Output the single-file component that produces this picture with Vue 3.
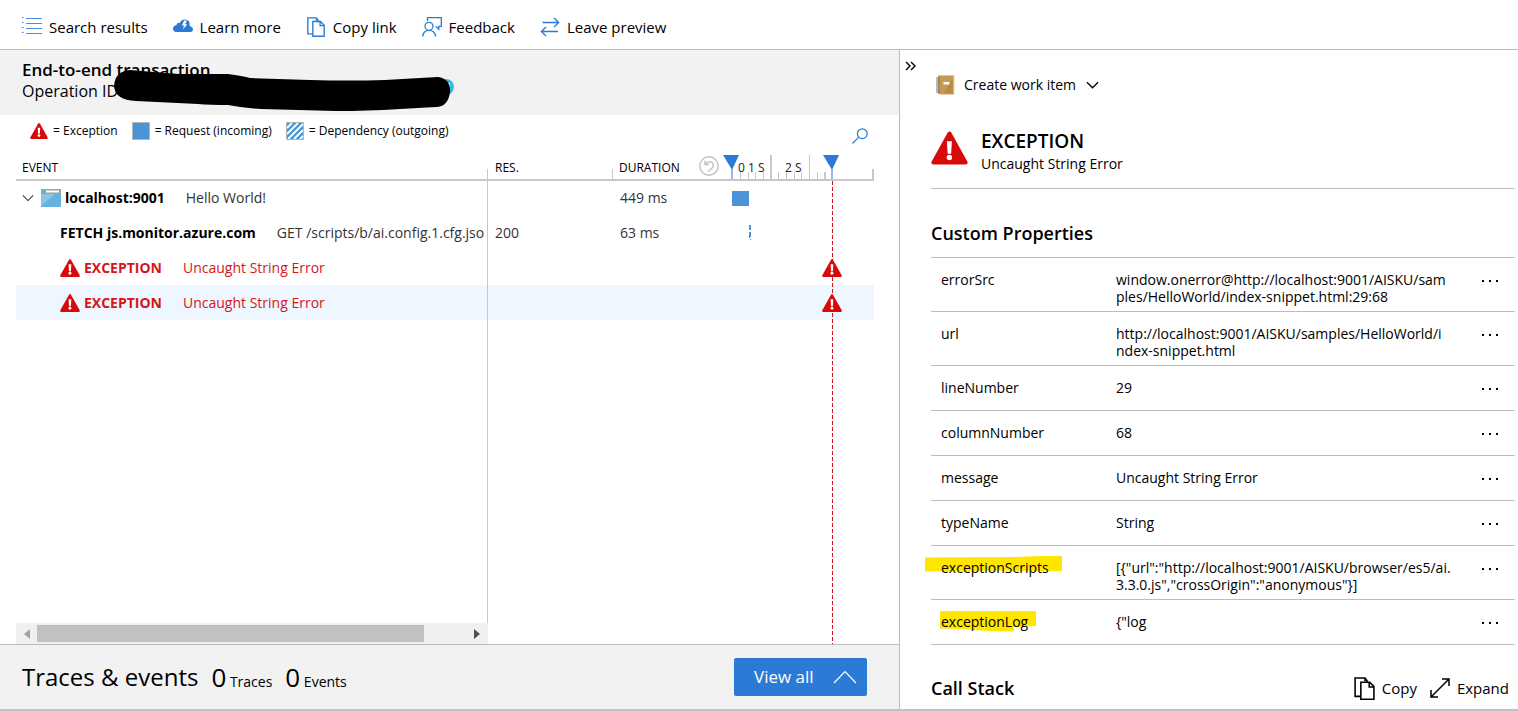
<script setup>
const legend = [
  { kind: 'exception', label: '= Exception' },
  { kind: 'request', label: '= Request (incoming)' },
  { kind: 'dependency', label: '= Dependency (outgoing)' },
]

const events = [
  { kind: 'root', name: 'localhost:9001', detail: 'Hello World!', res: '', duration: '449 ms', start: 9, width: 17 },
  { kind: 'fetch', name: 'FETCH js.monitor.azure.com', detail: 'GET /scripts/b/ai.config.1.cfg.jso', res: '200', duration: '63 ms', start: 26, width: 2 },
  { kind: 'error', name: 'EXCEPTION', detail: 'Uncaught String Error', res: '', duration: '', start: 99, width: 20 },
  { kind: 'error', name: 'EXCEPTION', detail: 'Uncaught String Error', res: '', duration: '', start: 99, width: 20, selected: true },
]

const properties = [
  { key: 'errorSrc', value: 'window.onerror@http://localhost:9001/AISKU/sam\nples/HelloWorld/index-snippet.html:29:68' },
  { key: 'url', value: 'http://localhost:9001/AISKU/samples/HelloWorld/i\nndex-snippet.html' },
  { key: 'lineNumber', value: '29' },
  { key: 'columnNumber', value: '68' },
  { key: 'message', value: 'Uncaught String Error' },
  { key: 'typeName', value: 'String' },
  { key: 'exceptionScripts', value: '[{"url":"http://localhost:9001/AISKU/browser/es5/ai.\n3.3.0.js","crossOrigin":"anonymous"}]', mark: 'scripts' },
  { key: 'exceptionLog', value: '{"log', mark: 'log' },
]
</script>

<template>
  <div class="page">
    <svg class="defs" aria-hidden="true">
      <symbol id="warn" viewBox="0 0 38 34">
        <path d="M17.2 1.2Q19-1 20.8 1.2L37.2 30.5Q38.6 33.6 35.5 34H2.5Q-.6 33.6.8 30.5Z" fill="#d70a0a" />
        <path d="M16.3 10h5.2l-.8 13h-3.6z" fill="#fff" />
        <circle cx="18.9" cy="26.8" r="2.8" fill="#fff" />
      </symbol>
      <symbol id="copy" viewBox="0 0 20 22">
        <path d="M6.5 18.5H1V1h9.5l2.5 3.5M10.500 1v3" fill="none" stroke="currentColor" stroke-width="1.500" />
        <path d="M6.500 5H15l4 4v12.200H6.500zM14.500 5v4.500H19" fill="#fff" stroke="currentColor" stroke-width="1.500" />
      </symbol>
    </svg>

    <header class="toolbar">
      <button class="tool" type="button">
        <svg class="tool-icon" viewBox="0 0 20 20" fill="none" stroke="#2b7bd6">
          <path d="M4 1.500h16M4 6.500h16M4 11.500h16M4 16.500h16" opacity=".85" />
          <path d="M0 .500h1.500M0 5.500h1.500M0 10.500h1.500M0 15.500h1.500" />
        </svg>
        Search results
      </button>
      <button class="tool" type="button">
        <svg class="tool-icon" viewBox="0 0 20 20">
          <path d="M3.500 15Q0 14.800 0 11.500.2 8.500 3.500 8 4 5.200 7 5.800 8.300 2.500 12 2.500q5 .4 4.700 5.500 0 1 .8 1.500Q20 10 20 12.500 19.800 15 17 15z" fill="#2b7bd6" />
          <path d="M11 3.500 9 8.500h2.200L9.700 12.500l4.600-5.300h-2.200l2-3.700z" fill="#fff" />
        </svg>
        Learn more
      </button>
      <button class="tool blue" type="button">
        <svg class="tool-icon"><use href="#copy" /></svg>
        <span class="ink">Copy link</span>
      </button>
      <button class="tool" type="button">
        <svg class="tool-icon" viewBox="0 0 20 20" fill="none" stroke="#2b7bd6" stroke-width="1.300">
          <path d="M5.500 4V.7h13.800v8.600h-2.500v3l-3-3" />
          <circle cx="7" cy="9.300" r="4" />
          <path d="M.7 19.500Q1.200 13.300 7 13.300t6.700 6.200" />
        </svg>
        Feedback
      </button>
      <button class="tool" type="button">
        <svg class="tool-icon" viewBox="0 0 20 20" fill="none" stroke="#2b7bd6" stroke-width="1.300">
          <path d="M2.500 5.500h16M14 1l4.700 4.500L14 10M18 14.500H1.500M6 10l-4.700 4.500L6 19" />
        </svg>
        Leave preview
      </button>
    </header>

    <main class="main">
      <section class="left">
        <div class="title-bar">
          <h1>End-to-end transaction</h1>
          <p>Operation ID</p>
          <svg class="scribble" viewBox="0 0 342 44" aria-hidden="true">
            <circle cx="332" cy="18" r="8" fill="#3fb8e0" />
            <path d="M332 14h4v8h-4z" fill="#fff" />
            <path d="M0 17Q1 2 16 1q23 2 49 4h49q15 2 22 4l60 2q40 1 75 0l35-2 18-1q13 2 12 15-2 15-14 15l-36 2q-34 2-64 2l-75-2q-18-1-33-4-18 0-30-1l-62-3Q1 31 0 17Z" fill="#000" />
          </svg>
        </div>

        <div class="legend-bar">
          <span v-for="item in legend" :key="item.kind" class="legend">
            <svg v-if="item.kind === 'exception'" class="legend-icon warn"><use href="#warn" /></svg>
            <svg v-else-if="item.kind === 'request'" class="legend-icon" viewBox="0 0 18 18">
              <path d="M.5.500h17v17H.5z" fill="#4a95da" stroke="#b5b5b5" />
            </svg>
            <svg v-else class="legend-icon" viewBox="0 0 18 18">
              <path d="M1 1h16v16H1z" fill="#4a95da" />
              <path d="M1 6 6 1M1 12 12 1M2 17 17 2M8 17l9-9M14 17l3-3" stroke="#fff" stroke-width="1.800" />
              <path d="M.5.500h17v17H.5z" fill="none" stroke="#b5b5b5" />
            </svg>
            {{ item.label }}
          </span>
          <button class="search" type="button" aria-label="Search">
            <svg viewBox="0 0 16 16" fill="none" stroke="#2b7bd6" stroke-width="1.200">
              <circle cx="10.300" cy="5.700" r="4.900" /><path d="M6.800 9.200.500 15.500" />
            </svg>
          </button>
        </div>

        <div class="chart">
          <table class="events">
            <colgroup><col /><col class="c-res" /><col class="c-dur" /><col class="c-time" /></colgroup>
            <thead>
              <tr>
                <th class="first">EVENT</th>
                <th class="res">RES.</th>
                <th class="dur">
                  <div class="dur-head">
                    <span>DURATION</span>
                    <button type="button" class="reset" aria-label="Reset zoom">
                      <svg viewBox="0 0 20 20" fill="none" stroke="#c2c2c2" stroke-width="1.400">
                        <circle cx="10" cy="10" r="9.200" />
                        <path d="M6 4.500v4h4M6.500 8.200Q8.500 5.700 11 5.800q3.400.4 3.300 3.600-.1 1.600-1.300 2.800L9 15.500" />
                      </svg>
                    </button>
                  </div>
                </th>
                <th class="time">
                  <svg class="ruler" viewBox="0 0 151 24">
                    <g stroke="#c8c8c8">
                      <path d="M17.500 17v7M25.500 17v7M32.500 17v7M40.500 17v7M55.500 17v7M63.500 17v7M71.500 17v7M78.500 17v7M94.500 17v7M86.500 0v24" />
                      <path d="M48 0v24M102 17v7M150 14v10" stroke-width="2" />
                    </g>
                    <path d="M0 0h16L9.500 14V24h-1V14zM100 0h16l-6.500 14V24h-1V14z" fill="#2b7bd6" />
                    <text x="15" y="17">0</text><text x="25" y="17">1 S</text><text x="62" y="17">2 S</text>
                  </svg>
                </th>
              </tr>
            </thead>
            <tbody>
              <tr v-for="(event, i) in events" :key="i" :class="[event.kind, { selected: event.selected }]">
                <td class="first">
                  <div class="event">
                    <svg v-if="event.kind === 'root'" class="chev" viewBox="0 0 14 8" fill="none" stroke="#333" stroke-width="1.200"><path d="M1 1l6 6 6-6" /></svg>
                    <svg v-if="event.kind === 'root'" class="site" viewBox="0 0 20 18">
                      <path d="M0 0h20v18H0z" fill="#66b4dc" />
                      <path d="M0 5h14L0 17z" fill="#8ac6e4" />
                      <path d="M0 0h20v5H0z" fill="#a0a1a2" />
                      <path d="M5 1.500h13v2H5z" fill="#fff" /><circle cx="2.500" cy="2.500" r="1.700" fill="#59b4d9" />
                    </svg>
                    <svg v-if="event.kind === 'error'" class="row-warn"><use href="#warn" /></svg>
                    <strong>{{ event.name }}</strong>
                    <span>{{ event.detail }}</span>
                  </div>
                </td>
                <td class="res">{{ event.res }}</td>
                <td class="dur">{{ event.duration }}</td>
                <td class="time">
                  <svg v-if="event.kind === 'error'" class="mark" :style="{ marginLeft: event.start + 'px', width: event.width + 'px' }"><use href="#warn" /></svg>
                  <div v-else class="bar" :style="{ marginLeft: event.start + 'px', width: event.width + 'px' }"></div>
                </td>
              </tr>
            </tbody>
          </table>
          <div class="guide event-guide"></div>
          <div class="guide res-guide"></div>
          <div class="cursor"></div>
          <div class="scrollbar">
            <svg viewBox="0 0 6 10"><path d="M6 0v10L0 5z" fill="#a3a3a3" /></svg>
            <div class="track"><div class="thumb"></div></div>
            <svg viewBox="0 0 6 10"><path d="M0 0v10l6-5z" fill="#505050" /></svg>
          </div>
        </div>

        <footer class="footer">
          <h2>Traces &amp; events</h2>
          <span class="count"><b>0</b> Traces</span>
          <span class="count"><b>0</b> Events</span>
          <button class="view-all" type="button">
            View all
            <svg viewBox="0 0 24 14" fill="none" stroke="#fff" stroke-width="1.200"><path d="M1 13 12 1.500 23 13" /></svg>
          </button>
        </footer>
      </section>

      <aside class="right">
        <button class="collapse" type="button" aria-label="Collapse panel">
          <svg viewBox="0 0 11 10" fill="none" stroke="#000" stroke-width="1.400"><path d="M1 1l4 4-4 4M6 1l4 4-4 4" /></svg>
        </button>
        <div class="details">
          <button class="work-item" type="button">
            <svg class="book" viewBox="0 0 20 20">
              <path d="M3 1h15.500v18H3z" fill="#b98b42" />
              <path d="M5 1h13.500v1.500L8 19H3V1z" fill="#c49a55" />
              <path d="M3 .500h16v18.800H5" fill="none" stroke="#dfc794" />
              <path d="M8.500 7h6v2.500h-6z" fill="#fff" />
              <path d="M3 2.500v16" stroke="#777" stroke-width="4" stroke-dasharray="1 1" />
            </svg>
            Create work item
            <svg class="drop" viewBox="0 0 14 8" fill="none" stroke="#000" stroke-width="1.400"><path d="M1 1l6 6 6-6" /></svg>
          </button>

          <div class="summary">
            <svg><use href="#warn" /></svg>
            <div>
              <h2>EXCEPTION</h2>
              <p>Uncaught String Error</p>
            </div>
          </div>

          <h3 class="props-title">Custom Properties</h3>
          <table class="props">
            <colgroup><col class="c-key" /><col /><col class="c-more" /></colgroup>
            <tbody>
              <tr v-for="prop in properties" :key="prop.key">
                <th scope="row">
                  <span class="key">
                    <svg v-if="prop.mark === 'scripts'" class="hl hl-scripts" viewBox="0 0 137 16"><path d="M0 1.500 90 1l25-1h22v15L75 14.500 0 15.500z" fill="#ffe600" /></svg>
                    <svg v-if="prop.mark === 'log'" class="hl hl-log" viewBox="0 0 96 21"><path d="M0 0h96v15l-22 1v4.500Q40 20 25 18L0 17.500z" fill="#ffe600" /></svg>
                    <span class="key-text">{{ prop.key }}</span>
                  </span>
                </th>
                <td>{{ prop.value }}</td>
                <td class="more">
                  <button type="button" aria-label="More">
                    <svg viewBox="0 0 16 2"><path d="M0 0h2v2H0zM7 0h2v2H7zM14 0h2v2h-2z" /></svg>
                  </button>
                </td>
              </tr>
            </tbody>
          </table>

          <div class="stack-bar">
            <h3>Call Stack</h3>
            <button type="button"><svg class="copy-icon"><use href="#copy" /></svg>Copy</button>
            <button type="button">
              <svg class="expand-icon" viewBox="0 0 20 20" fill="none" stroke="#000" stroke-width="1.500"><path d="M1.500 18.500l17-17M12 1h7v7M1 12v7h7" /></svg>Expand
            </button>
          </div>
        </div>
      </aside>
    </main>
  </div>
</template>

<style>
body { margin: 0; }
</style>

<style scoped>
.page {
  display: flex;
  flex-direction: column;
  box-sizing: border-box;
  height: 100vh;
  overflow: hidden;
  border-bottom: 2px solid #bfc0cd;
  background: #fff;
  color: #000;
  font: 14px/20px "Open Sans", "Noto Sans", sans-serif;
}
.defs { position: absolute; width: 0; height: 0; }
h1, h2, h3, p { margin: 0; }
button { padding: 0; border: 0; background: none; color: inherit; font: inherit; cursor: pointer; }
svg { display: block; flex: none; }

.toolbar { display: flex; flex: none; align-items: center; gap: 25px; box-sizing: border-box; height: 50px; padding: 4px 22px 0; border-bottom: 1px solid #bdbdbd; }
.tool { display: flex; align-items: center; gap: 7px; font-size: 15px; }
.tool-icon { width: 20px; height: 20px; }
.blue { color: #2b7bd6; }
.ink { color: #000; }

.main { display: grid; flex: 1; grid-template-columns: 900fr 618fr; min-height: 0; }
.left { display: flex; flex-direction: column; min-width: 0; border-right: 1px solid #bdbdbd; }
.title-bar { position: relative; box-sizing: border-box; height: 65px; padding: 9px 22px; background: #f2f2f2; }
.title-bar h1 { font-size: 17px; font-weight: 600; line-height: 22px; }
.title-bar p { font-size: 16px; line-height: 20px; }
.scribble { position: absolute; top: 19px; left: 114px; width: 342px; height: 44px; }

.legend-bar { display: flex; align-items: center; gap: 14px; height: 38px; padding: 0 31px 0 30px; font-size: 12px; }
.legend { display: flex; align-items: center; gap: 5px; margin-bottom: 7px; }
.legend-icon { width: 18px; height: 18px; }
.legend-icon.warn { height: 16px; }
.search { margin-left: auto; margin-top: 4px; }
.search svg { width: 16px; height: 16px; }

.chart { position: relative; flex: 1; margin: 0 25px 0 16px; min-height: 0; }
.events { width: 100%; border-collapse: separate; border-spacing: 0; table-layout: fixed; }
.c-res { width: 126px; }
.c-dur { width: 110px; }
.c-time { width: 151px; }
.events th { padding: 4px 6px 0; border-bottom: 2px solid #c8c8c8; font-size: 12px; font-weight: 400; text-align: left; vertical-align: middle; }
.events th.dur { padding: 0 6px; }
.events td { height: 35px; padding: 0 7px; color: #333; vertical-align: middle; }
.events .root td { height: 34px; }
.events .first { overflow: hidden; padding-left: 6px; padding-right: 0; }
.events .res { padding-left: 8px; }
.events .time, .events th.time { padding: 0; }
.dur-head { display: flex; align-items: center; justify-content: space-between; margin-right: -2px; }
.dur-head span { padding-top: 4px; }
.reset svg { width: 20px; height: 20px; }
.ruler { width: 151px; height: 24px; margin-top: 2px; fill: #222; font-size: 12px; }
.event { display: flex; align-items: center; overflow: hidden; white-space: nowrap; }
.event strong { color: #000; font-weight: 700; margin-right: 21px; }
.chev { width: 12px; height: 8px; margin-right: 7px; }
.site { width: 20px; height: 18px; margin-right: 4px; }
.fetch .event, .error .event { padding-left: 38px; }
.row-warn { width: 20px; height: 18px; margin-right: 4px; }
.error .event, .error .event strong { color: #d6141a; }
.selected td { background: #eef6ff; }
.bar { height: 15px; background: #4a95da; }
.fetch .bar { background: repeating-linear-gradient(160deg, #4a95da 0 5px, #fff 5px 7px); }
.mark { position: relative; z-index: 1; height: 18px; }
.guide { position: absolute; width: 1px; background: #c8c8c8; }
.event-guide { top: 16px; bottom: 20px; right: 386px; }
.res-guide { top: 16px; height: 12px; right: 261px; }
.cursor { position: absolute; top: 28px; right: 41px; bottom: 0; width: 1px; background: repeating-linear-gradient(#d6141a 0 4px, transparent 4px 6px); }
.scrollbar { position: absolute; right: 386px; bottom: 0; left: 0; display: flex; align-items: center; gap: 7px; box-sizing: border-box; height: 21px; padding: 0 8px; background: #f0f0f0; }
.scrollbar svg { width: 6px; height: 10px; }
.track { flex: 1; }
.thumb { width: 90%; height: 17px; background: #c1c1c1; }

.footer { display: flex; flex: none; align-items: center; box-sizing: border-box; height: 65px; padding: 0 32px 0 22px; border-top: 1px solid #bdbdbd; background: #f2f2f2; }
.footer h2 { font-size: 24px; font-weight: 400; line-height: 32px; }
.count { margin-left: 13px; }
.count b { font-size: 26px; font-weight: 400; line-height: 32px; }
.view-all { display: flex; align-items: center; justify-content: space-between; box-sizing: border-box; width: 133px; height: 38px; margin-left: auto; padding: 0 10px 0 20px; border-radius: 2px; background: #2b7bd6; color: #fff; font-size: 17px; }
.view-all svg { width: 24px; height: 14px; }

.right { display: flex; align-items: flex-start; min-width: 0; padding-right: 3px; overflow: hidden; }
.collapse { flex: none; width: 31px; padding: 11px 0 0 5px; }
.collapse svg { width: 11px; height: 10px; }
.details { flex: 1; min-width: 0; }
.work-item { display: flex; align-items: center; margin: 25px 0 0 4px; }
.book { width: 20px; height: 20px; margin-right: 9px; }
.drop { width: 13px; height: 8px; margin-left: 10px; }
.summary { display: flex; align-items: center; gap: 13px; box-sizing: border-box; height: 94px; padding-top: 20px; padding-bottom: 2px; border-bottom: 1px solid #bdbdbd; }
.summary svg { width: 37px; height: 34px; margin-bottom: 6px; }
.summary h2 { font-size: 19px; font-weight: 600; line-height: 26px; }
.summary p { line-height: 20px; }
.props-title { padding: 31px 0 11px; }
h3 { font-size: 18px; font-weight: 600; line-height: 26px; }
.props { width: 100%; border-collapse: separate; border-spacing: 0; table-layout: fixed; border-bottom: 1px solid #bdbdbd; line-height: 17px; }
.c-key { width: 185px; }
.c-more { width: 55px; }
.props th, .props td { height: 25px; padding: 13px 0 6px; border-top: 1px solid #bdbdbd; font-weight: 400; text-align: left; vertical-align: top; white-space: pre-line; overflow-wrap: anywhere; }
.props th { padding-left: 10px; }
.key { position: relative; }
.key-text { position: relative; }
.hl { position: absolute; }
.hl-scripts { top: -2px; left: -16px; width: 137px; height: 16px; }
.hl-log { top: -1px; left: -1px; width: 96px; height: 21px; }
.more button { display: block; padding: 9px 0 7px 22px; }
.more svg { width: 16px; height: 2px; }
.stack-bar { display: flex; align-items: center; gap: 13px; height: 36px; margin-top: 25px; padding-right: 6px; }
.stack-bar h3 { margin-right: auto; }
.stack-bar button { display: flex; align-items: center; gap: 7px; font-size: 15px; }
.copy-icon { width: 21px; height: 23px; }
.expand-icon { width: 20px; height: 20px; }
</style>
